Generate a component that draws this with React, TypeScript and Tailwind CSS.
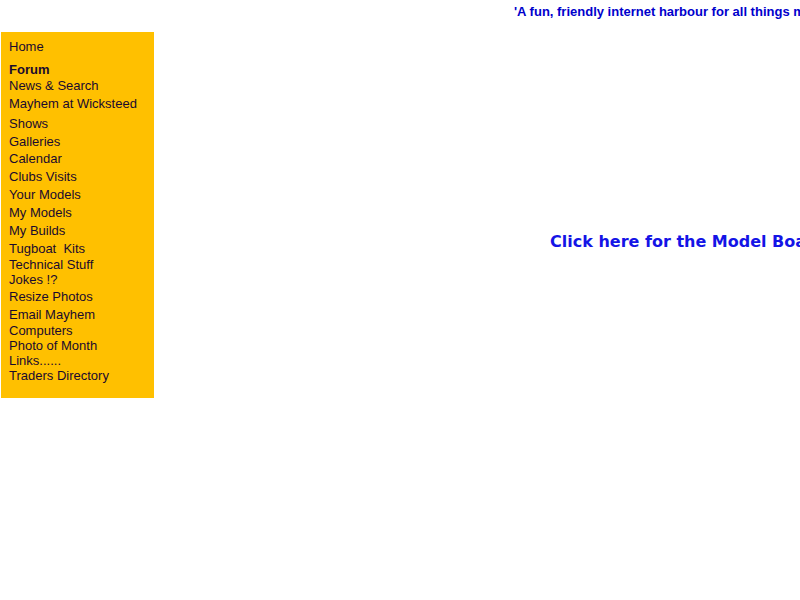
const links: { label: string; mt: string; bold?: boolean }[] = [
  { label: "Home", mt: "mt-[7px]" },
  { label: "Forum", mt: "mt-[8px]", bold: true },
  { label: "News & Search", mt: "mt-[1px]" },
  { label: "Mayhem at Wicksteed", mt: "mt-[3px]" },
  { label: "Shows", mt: "mt-[5px]" },
  { label: "Galleries", mt: "mt-[3px]" },
  { label: "Calendar", mt: "mt-[2px]" },
  { label: "Clubs Visits", mt: "mt-[3px]" },
  { label: "Your Models", mt: "mt-[3px]" },
  { label: "My Models", mt: "mt-[3px]" },
  { label: "My Builds", mt: "mt-[3px]" },
  { label: "Tugboat\u00a0 Kits", mt: "mt-[3px]" },
  { label: "Technical Stuff", mt: "mt-[1px]" },
  { label: "Jokes !?", mt: "mt-0" },
  { label: "Resize Photos", mt: "mt-[2px]" },
  { label: "Email Mayhem", mt: "mt-[3px]" },
  { label: "Computers", mt: "mt-[1px]" },
  { label: "Photo of Month", mt: "mt-0" },
  { label: "Links......", mt: "mt-0" },
  { label: "Traders Directory", mt: "mt-0" },
]

export default function App() {
  return (
    <div className="w-[800px] h-[600px] overflow-hidden bg-white font-['Liberation_Sans',Arial,sans-serif]">
      <div className="h-[32px] pl-[514px] pt-[4px] whitespace-nowrap text-[13px] leading-[15px]">
        <span className="font-bold text-[#0000cc]">
          'A fun, friendly internet harbour for all things model boating'
        </span>
      </div>
      <div className="flex">
        <nav className="ml-[1px] w-[153px] h-[366px] bg-[#ffc000] pl-[8px] flex flex-col">
          {links.map((link) => (
            <a
              key={link.label}
              href="#"
              className={`${link.mt} text-[13px] leading-[15px] text-[#1a0a2e] whitespace-nowrap ${
                link.bold ? "font-bold" : ""
              }`}
            >
              {link.label}
            </a>
          ))}
        </nav>
        <div className="flex-1 pl-[396px] pt-[198px] whitespace-nowrap overflow-hidden">
          <a
            href="#"
            className="font-['DejaVu_Sans',Verdana,sans-serif] font-bold text-[16px] text-[#1414e6]"
          >
            Click here for the Model Boat Mayhem Forum
          </a>
        </div>
      </div>
    </div>
  )
}
